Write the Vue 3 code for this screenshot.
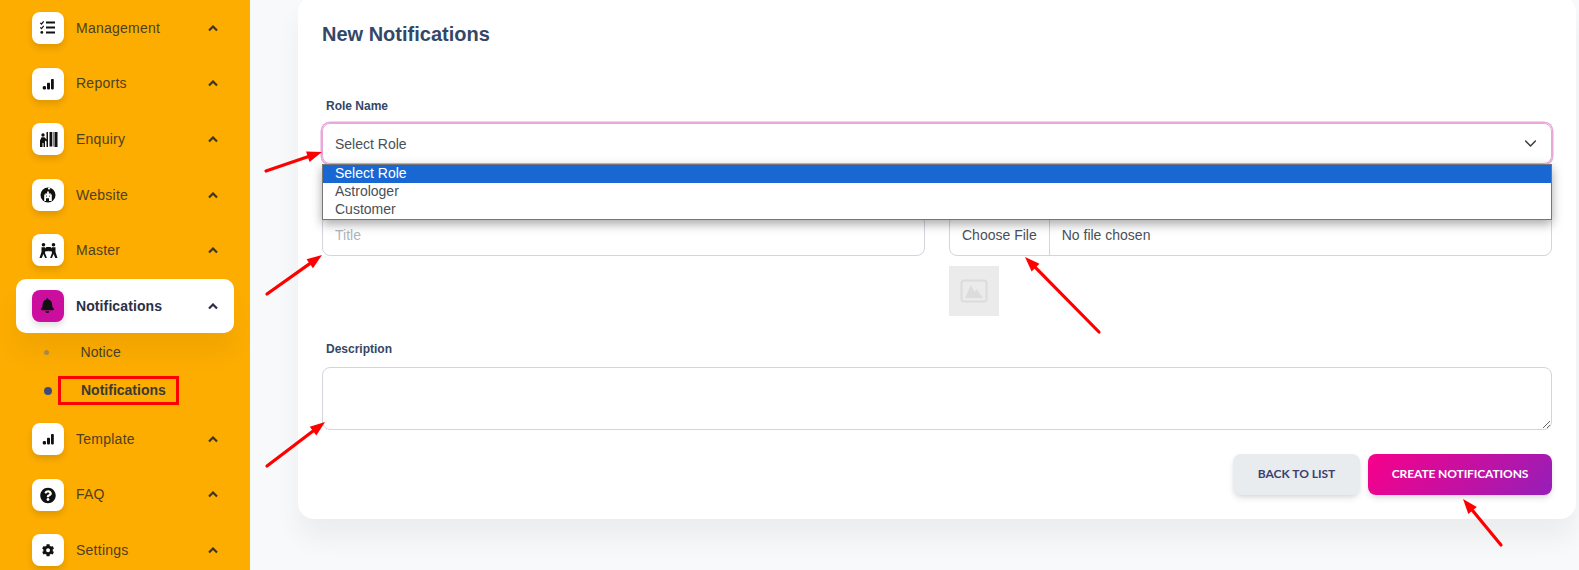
<script setup>
const check = (y) => `<path d="M8.3 ${y}l1.2 1.2 2.2-2.7" fill="none" stroke="#111" stroke-width="1.2"/>`
const bars = '<rect x="10.8" y="18" width="3.2" height="3.4" rx="1.2" fill="#111"/><rect x="15" y="14.8" width="3" height="6.600" rx=".8" fill="#111"/><rect x="19" y="11" width="2.800" height="10.400" rx=".8" fill="#111"/>'
const figure = '<circle cx="11.500" cy="10.800" r="1.800" fill="#111"/><path d="M9.500 13.200h3.500l1.500 2h2v2h-3l-.6 1.500 2 5.300h-1.800l-1.700-4-1.700 4H7.500l2-6z" fill="#111"/>'
const icons = {
  list: `${check(10.8)}${check(15.4)}<circle cx="9.8" cy="20.4" r="1.4" fill="#111"/><path d="M14 10.500h9M14 15.500h9M14 20.500h9" stroke="#111" stroke-width="1.800"/>`,
  bars,
  enquiry: '<circle cx="11" cy="12" r="1.700" fill="#111"/><path d="M8 24v-6.500l1.500-3.200h3l2 2.200V9h1.500v15h-1.500v-5.500l-1.500-1V24H11.500v-4h-1v4z" fill="#111"/><path d="M17.500 9h2.500v14.500h-2.500zM20.700 9h.8v14.500h-.8zM22.500 9h3v15h-3z" fill="#111"/>',
  website: '<circle cx="16" cy="16" r="7.500" fill="#111"/><path d="M12.200 22v-6.500h1.300V14h1v1h.6v-2.500h1.800V15h.6v-1h1v1.500h1.300V22h-2.800v-2.800h-3V22z" fill="#fff"/><path d="M16 8.800h2.200v1.600H16z" fill="#fff"/><circle cx="14.500" cy="17" r=".6" fill="#111"/><circle cx="17.500" cy="17" r=".6" fill="#111"/>',
  master: `<rect x="14" y="13" width="5" height="3.600" rx=".5" fill="#111"/>${figure}<g transform="matrix(-1 0 0 1 33 0)">${figure}</g>`,
  bell: '<path transform="translate(8.800 8) scale(.0293)" fill="#111" d="M224 512c35.32 0 63.97-28.65 63.97-64H160.030c0 35.350 28.650 64 63.970 64zm215.390-149.710c-19.320-20.760-55.470-51.990-55.470-154.290 0-77.700-54.480-139.900-127.940-155.160V32c0-17.670-14.320-32-31.980-32s-31.980 14.330-31.980 32v20.840C118.560 68.100 64.080 130.300 64.080 208c0 102.300-36.150 133.530-55.470 154.290-6 6.450-8.660 14.160-8.610 21.710.11 16.400 12.980 32 32.100 32h383.800c19.120 0 32-15.600 32.100-32 .05-7.550-2.610-15.270-8.610-21.710z"/>',
  help: '<path transform="translate(8 8.500) scale(.0312)" fill="#111" d="M504 256c0 136.997-111.043 248-248 248S8 392.997 8 256C8 119.083 119.043 8 256 8s248 111.083 248 248zM262.655 90c-54.497 0-89.255 22.957-116.549 63.758-3.536 5.286-2.353 12.415 2.715 16.258l34.699 26.310c5.205 3.947 12.621 3.008 16.665-2.122 17.864-22.658 30.113-35.797 57.303-35.797 20.429 0 45.698 13.148 45.698 32.958 0 14.976-12.363 22.667-32.534 33.976C247.128 238.528 216 254.941 216 296v4c0 6.627 5.373 12 12 12h56c6.627 0 12-5.373 12-12v-1.333c0-28.462 83.186-29.647 83.186-106.667 0-58.002-60.165-102-116.531-102zM256 338c-25.365 0-46 20.635-46 46 0 25.364 20.635 46 46 46s46-20.636 46-46c0-25.365-20.635-46-46-46z"/>',
  gear: '<path transform="translate(9.800 10) scale(.0245)" fill="#111" d="M487.400 315.700l-42.600-24.600c4.300-23.200 4.300-47 0-70.200l42.600-24.600c4.900-2.800 7.100-8.600 5.500-14-11.100-35.600-30-67.800-54.700-94.600-3.800-4.100-10-5.100-14.800-2.300L380.800 110c-17.900-15.400-38.500-27.300-60.800-35.100V25.800c0-5.600-3.900-10.500-9.400-11.700-36.700-8.200-74.300-7.800-109.200 0-5.500 1.200-9.400 6.100-9.400 11.700V75c-22.200 7.900-42.800 19.800-60.800 35.100L88.700 85.500c-4.900-2.800-11-1.900-14.800 2.300-24.700 26.700-43.600 58.900-54.700 94.600-1.700 5.400.6 11.200 5.500 14L67.300 221c-4.300 23.200-4.300 47 0 70.200l-42.600 24.600c-4.900 2.800-7.100 8.600-5.500 14 11.100 35.600 30 67.800 54.700 94.600 3.800 4.100 10 5.100 14.800 2.300l42.600-24.600c17.900 15.400 38.500 27.300 60.800 35.100v49.200c0 5.600 3.900 10.500 9.400 11.700 36.700 8.200 74.300 7.800 109.200 0 5.500-1.200 9.400-6.100 9.400-11.700v-49.200c22.200-7.900 42.800-19.800 60.800-35.100l42.600 24.600c4.900 2.800 11 1.900 14.800-2.300 24.700-26.700 43.600-58.900 54.700-94.600 1.500-5.500-.7-11.300-5.600-14.100zM256 336c-44.100 0-80-35.900-80-80s35.900-80 80-80 80 35.900 80 80-35.900 80-80 80z"/>'
}

const topItems = [
  { label: 'Management', icon: 'list' },
  { label: 'Reports', icon: 'bars' },
  { label: 'Enquiry', icon: 'enquiry' },
  { label: 'Website', icon: 'website' },
  { label: 'Master', icon: 'master' }
]
const bottomItems = [
  { label: 'Template', icon: 'bars' },
  { label: 'FAQ', icon: 'help' },
  { label: 'Settings', icon: 'gear' }
]
const roles = ['Select Role', 'Astrologer', 'Customer']

const arrowSegments = [
  [266, 171, 322, 152],
  [267, 294, 322, 255],
  [267, 466, 325, 422],
  [1099, 332, 1025, 257],
  [1501, 545, 1463, 499]
]
const arrows = arrowSegments.map(([x1, y1, x2, y2]) => {
  const a = Math.atan2(y2 - y1, x2 - x1)
  const len = 15
  const wing = 5.5
  const bx = x2 - Math.cos(a) * len
  const by = y2 - Math.sin(a) * len
  const px = -Math.sin(a) * wing
  const py = Math.cos(a) * wing
  return {
    x1, y1, x2: bx, y2: by,
    head: `${x2},${y2} ${bx + px},${by + py} ${bx - px},${by - py}`
  }
})
</script>

<template>
  <div class="page">
    <aside class="sidebar">
      <a v-for="item in topItems" :key="item.label" class="nav-item">
        <span class="nav-icon"><svg viewBox="0 0 32 32" width="32" height="32" v-html="icons[item.icon]"></svg></span>
        <span class="nav-label">{{ item.label }}</span>
        <svg class="chevron" viewBox="0 0 10 7" width="10" height="7"><path d="M1 5.500l4-4 4 4" /></svg>
      </a>
      <a class="nav-item active">
        <span class="nav-icon"><svg viewBox="0 0 32 32" width="32" height="32" v-html="icons.bell"></svg></span>
        <span class="nav-label">Notifications</span>
        <svg class="chevron" viewBox="0 0 10 7" width="10" height="7"><path d="M1 5.500l4-4 4 4" /></svg>
      </a>
      <div class="sub-list">
        <a class="sub-item"><i class="dot"></i><span class="sub-text">Notice</span></a>
        <a class="sub-item current"><i class="dot"></i><span class="sub-text">Notifications</span></a>
      </div>
      <a v-for="item in bottomItems" :key="item.label" class="nav-item">
        <span class="nav-icon"><svg viewBox="0 0 32 32" width="32" height="32" v-html="icons[item.icon]"></svg></span>
        <span class="nav-label">{{ item.label }}</span>
        <svg class="chevron" viewBox="0 0 10 7" width="10" height="7"><path d="M1 5.500l4-4 4 4" /></svg>
      </a>
    </aside>

    <main class="main">
      <section class="card">
        <h1 class="title">New Notifications</h1>

        <label class="field-label role-label">Role Name</label>
        <div class="select">
          <span>Select Role</span>
          <svg viewBox="0 0 16 16" width="13" height="13"><path d="M2 5l6 6 6-6" /></svg>
          <ul class="dropdown">
            <li v-for="(role, i) in roles" :key="role" :class="{ selected: i === 0 }">{{ role }}</li>
          </ul>
        </div>

        <div class="two-col">
          <div>
            <input class="control" type="text" placeholder="Title" />
          </div>
          <div>
            <div class="file">
              <span class="file-btn">Choose File</span>
              <span class="file-name">No file chosen</span>
            </div>
            <div class="thumb">
              <svg viewBox="0 0 28 24" width="28" height="24">
                <rect x="1.500" y="1.500" width="25" height="21" rx="2.500" fill="none" stroke="#dcdcdc" stroke-width="2" />
                <path d="M5 19l6-13 3.500 7 2-3 6.500 9z" fill="#dcdcdc" />
              </svg>
            </div>
          </div>
        </div>

        <label class="field-label desc-label">Description</label>
        <textarea class="control area"></textarea>

        <div class="actions">
          <button class="btn back" type="button">BACK TO LIST</button>
          <button class="btn create" type="button">CREATE NOTIFICATIONS</button>
        </div>
      </section>
    </main>

    <svg class="arrows" viewBox="0 0 1579 570" width="1579" height="570">
      <g v-for="(a, i) in arrows" :key="i">
        <line :x1="a.x1" :y1="a.y1" :x2="a.x2" :y2="a.y2" />
        <polygon :points="a.head" />
      </g>
    </svg>
  </div>
</template>

<style>
html, body { margin: 0; background: #f8f9fa; }
</style>

<style scoped>
* { box-sizing: border-box; }
.page {
  position: relative;
  display: flex;
  width: 1579px;
  height: 570px;
  overflow: hidden;
  background: #f8f9fa;
  font-family: "Liberation Sans", Arial, sans-serif;
}
.sidebar {
  flex: 0 0 250px;
  padding-top: 1px;
  background: #fdad00;
  display: flex;
  flex-direction: column;
}
.nav-item {
  display: flex;
  align-items: center;
  flex: 0 0 54px;
  margin: 0 16px 1.5px;
  padding: 0 16px;
  border-radius: 10px;
  color: #4f4020;
  font-size: 14px;
}
.nav-item:nth-child(3), .nav-item:nth-child(5) { margin-bottom: 2px; }
.nav-item:nth-child(4) { margin-bottom: 1px; }
.nav-icon {
  flex: 0 0 32px;
  width: 32px;
  height: 32px;
  border-radius: 8px;
  background: #fff;
  box-shadow: 0 4px 6px rgba(0, 0, 0, 0.12);
  display: flex;
}
.nav-label {
  margin-left: 12px;
  padding-bottom: 1px;
  flex: 1;
  letter-spacing: 0.25px;
}
.chevron path { fill: none; stroke: #3f3524; stroke-width: 2.2; }
.nav-item.active {
  background: #fff;
  color: #2c2f45;
  font-weight: 700;
  box-shadow: 0 20px 27px rgba(0, 0, 0, 0.05);
  margin-bottom: 0;
}
.active .nav-label { letter-spacing: 0.1px; padding-bottom: 0; }
.active .nav-icon { background: #cc0e9e; }
.active .chevron path { stroke: #2c2f45; }
.sub-list { flex: 0 0 79px; }
.sub-item {
  display: flex;
  align-items: center;
  height: 38px;
  padding-left: 44px;
  font-size: 14px;
  color: #463f2c;
}
.dot {
  width: 5px;
  height: 5px;
  border-radius: 50%;
  background: #a88a45;
}
.sub-text { margin-left: 31.500px; letter-spacing: 0.1px; }
.current { padding-top: 1px; }
.current .dot {
  width: 8px;
  height: 8px;
  background: #3f4a7a;
}
.current .sub-text {
  margin-left: 6px;
  padding: 0 10px 0 20px;
  line-height: 23px;
  border: 3px solid #f00;
  font-weight: 700;
  color: #3b3a33;
  letter-spacing: 0;
}

.main {
  flex: 1;
  padding: 0 3px 0 48px;
}
.card {
  margin-top: -4px;
  padding: 24px;
  background: #fff;
  border-radius: 16px;
  box-shadow: 0 20px 27px rgba(0, 0, 0, 0.05);
}
.title {
  margin: 1px 0 50px;
  font-size: 20px;
  line-height: 26px;
  font-weight: 700;
  color: #344767;
}
.field-label {
  display: block;
  height: 18px;
  margin: 0 0 9px 4px;
  font-size: 12px;
  line-height: 18px;
  font-weight: 700;
  color: #344767;
}
.role-label { margin-bottom: 8px; }
.select {
  position: relative;
  display: flex;
  align-items: center;
  justify-content: space-between;
  height: 41px;
  padding: 0 14px 0 12px;
  border: 1px solid #e9a8dc;
  border-radius: 8px;
  box-shadow: 0 0 0 1.500px #e9a8dc;
  font-size: 14px;
  color: #495057;
}
.select > svg path { fill: none; stroke: #343a40; stroke-width: 1.800; stroke-linecap: round; stroke-linejoin: round; }
.dropdown {
  position: absolute;
  z-index: 2;
  top: 40px;
  left: -1px;
  right: -1px;
  margin: 0;
  padding: 0;
  list-style: none;
  background: #fff;
  border: 1px solid #767676;
  box-shadow: 0 4px 10px rgba(0, 0, 0, 0.35);
}
.dropdown li {
  height: 18px;
  padding-left: 12px;
  line-height: 16px;
  color: #495057;
}
.dropdown li.selected { background: #1967d2; color: #fff; }
.two-col {
  display: grid;
  grid-template-columns: 1fr 1fr;
  column-gap: 24px;
  margin-top: 51px;
}
.control {
  display: block;
  width: 100%;
  height: 41px;
  padding: 0 12px 2px;
  border: 1px solid #d2d6da;
  border-radius: 8px;
  outline: none;
  background: #fff;
  font: 14px "Liberation Sans", Arial, sans-serif;
  color: #495057;
}
.control::placeholder { color: #adb5bd; }
.file {
  display: flex;
  align-items: center;
  height: 41px;
  border: 1px solid #d2d6da;
  border-radius: 8px;
  font-size: 14px;
  color: #495057;
}
.file-btn {
  display: flex;
  align-items: center;
  height: 100%;
  padding: 0 12px 2px;
  border-right: 1px solid #d2d6da;
}
.file-name { margin-left: 12px; padding-bottom: 2px; }
.thumb {
  display: flex;
  align-items: center;
  justify-content: center;
  width: 50px;
  height: 50px;
  margin-top: 10px;
  background: #ebebeb;
}
.desc-label { margin-top: 24px; }
.area {
  height: 63px;
  padding-top: 8px;
}
.actions {
  display: flex;
  justify-content: flex-end;
  gap: 8px;
  margin-top: 24px;
}
.btn {
  height: 41px;
  padding: 0 0 2px;
  border: 0;
  border-radius: 8px;
  font: 700 12px Lato, sans-serif;
  box-shadow: 0 4px 7px -1px rgba(0, 0, 0, 0.11), 0 2px 4px -1px rgba(0, 0, 0, 0.07);
}
.back { width: 127px; background: #e9ecef; color: #3a416f; }
.create {
  width: 184px;
  color: #fff;
  letter-spacing: -0.1px;
  background: linear-gradient(310deg, #951fb8, #f8008a);
}
.arrows {
  position: absolute;
  top: 0;
  left: 0;
  z-index: 3;
  pointer-events: none;
}
.arrows line { stroke: #f00; stroke-width: 3.200; stroke-linecap: round; }
.arrows polygon { fill: #f00; }
</style>
